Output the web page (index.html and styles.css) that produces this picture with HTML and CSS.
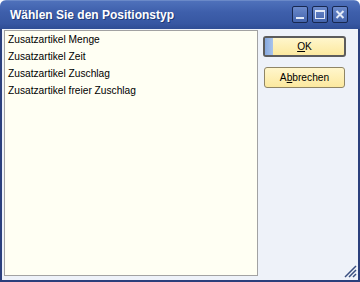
FILE: index.html
```html
<!DOCTYPE html>
<html>
<head>
<meta charset="utf-8">
<link rel="stylesheet" href="styles.css">
</head>
<body>
<div class="window">
  <div class="titlebar">
    <span class="title">Wählen Sie den Positionstyp</span>
    <div class="tbtns">
      <span class="tbtn"><svg width="14" height="15" viewBox="0 0 14 15"><rect x="3" y="10" width="8" height="2" fill="#e4ebf8"/></svg></span>
      <span class="tbtn"><svg width="14" height="15" viewBox="0 0 14 15"><rect x="2.5" y="3.5" width="9" height="8" fill="none" stroke="#e4ebf8"/><rect x="2" y="3" width="10" height="2" fill="#e4ebf8"/></svg></span>
      <span class="tbtn"><svg width="14" height="15" viewBox="0 0 14 15"><path d="M3.5 4 L10.5 11 M10.5 4 L3.5 11" stroke="#e4ebf8" stroke-width="2"/></svg></span>
    </div>
  </div>
  <div class="body">
    <div class="list">
      <div class="item">Zusatzartikel Menge</div>
      <div class="item">Zusatzartikel Zeit</div>
      <div class="item">Zusatzartikel Zuschlag</div>
      <div class="item">Zusatzartikel freier Zuschlag</div>
    </div>
    <div class="side">
      <div class="btn btn-default"><span class="focus"></span><span class="lbl"><u>O</u>K</span></div>
      <div class="btn btn-cancel"><span class="lbl">A<u>b</u>brechen</span></div>
    </div>
    <svg class="grip" width="14" height="14" viewBox="0 0 14 14">
      <path d="M13 2 L2 13 M13 6 L6 13 M13 10 L10 13" stroke="#3a4f80" stroke-width="1.5"/>
    </svg>
  </div>
</div>
</body>
</html>
```
FILE: styles.css
```css
html, body {
  margin: 0;
  padding: 0;
  background: #ffffff;
}
body {
  font-family: "Liberation Sans", Arial, sans-serif;
}
.window {
  width: 360px;
  height: 282px;
  display: flex;
  flex-direction: column;
  border-radius: 6px 6px 0 0;
  overflow: hidden;
  background: #eef2f9;
}
.titlebar {
  height: 29px;
  flex: none;
  display: flex;
  align-items: center;
  justify-content: space-between;
  background: linear-gradient(to bottom, #4f71bb 0%, #3e5fab 40%, #3757a2 80%, #2f4d94 100%);
  border-top: 1px solid #6a89c8;
  box-sizing: border-box;
}
.title {
  font-family: "Liberation Sans", Arial, sans-serif;
  font-weight: bold;
  font-size: 12px;
  color: #ffffff;
  padding-left: 10px;
  text-shadow: 1px 1px 0 #203a78;
}
.tbtns {
  display: flex;
  gap: 4px;
  padding-right: 12px;
  margin-top: -2px;
}
.tbtn {
  width: 14px;
  height: 15px;
  border: 1px solid #18284f;
  border-radius: 2px;
  background: linear-gradient(to bottom, #6a89cb, #4464ac);
  display: block;
}
.tbtn svg { display: block; }
.body {
  position: relative;
  flex: 1;
  display: flex;
  border-left: 2px solid #2a3f7c;
  border-right: 2px solid #2a3f7c;
  border-bottom: 2px solid #2a3f7c;
  padding: 1px 0 4px 2px;
  box-sizing: border-box;
}
.list {
  width: 254px;
  box-sizing: border-box;
  border: 1px solid #a2a2a2;
  background: #fffff3;
  padding: 2px 0 0 3px;
}
.item {
  font-family: "Liberation Sans", Arial, sans-serif;
  font-size: 10.2px;
  height: 17px;
  line-height: 14px;
  color: #000000;
}
.side {
  display: flex;
  flex-direction: column;
  padding: 6px 0 0 5px;
  gap: 10px;
}
.btn {
  position: relative;
  box-sizing: border-box;
  height: 21px;
  border-radius: 3px;
  background: linear-gradient(to bottom, #fff6cc, #fce99f);
  display: flex;
  align-items: center;
  justify-content: center;
  font-family: "Liberation Sans", Arial, sans-serif;
  font-size: 10.2px;
  color: #000;
}
.btn-default {
  width: 83px;
  border: 2px solid #5c5c5c;
}
.btn-cancel {
  width: 81px;
  margin-left: 1px;
  border: 1px solid #8f8565;
}
.focus {
  position: absolute;
  left: 0;
  top: 0;
  bottom: 0;
  width: 8px;
  background: linear-gradient(to right, #86a8de, #a9c4ec);
}
.lbl { position: relative; }
.grip {
  position: absolute;
  right: 1px;
  bottom: 2px;
}
```
